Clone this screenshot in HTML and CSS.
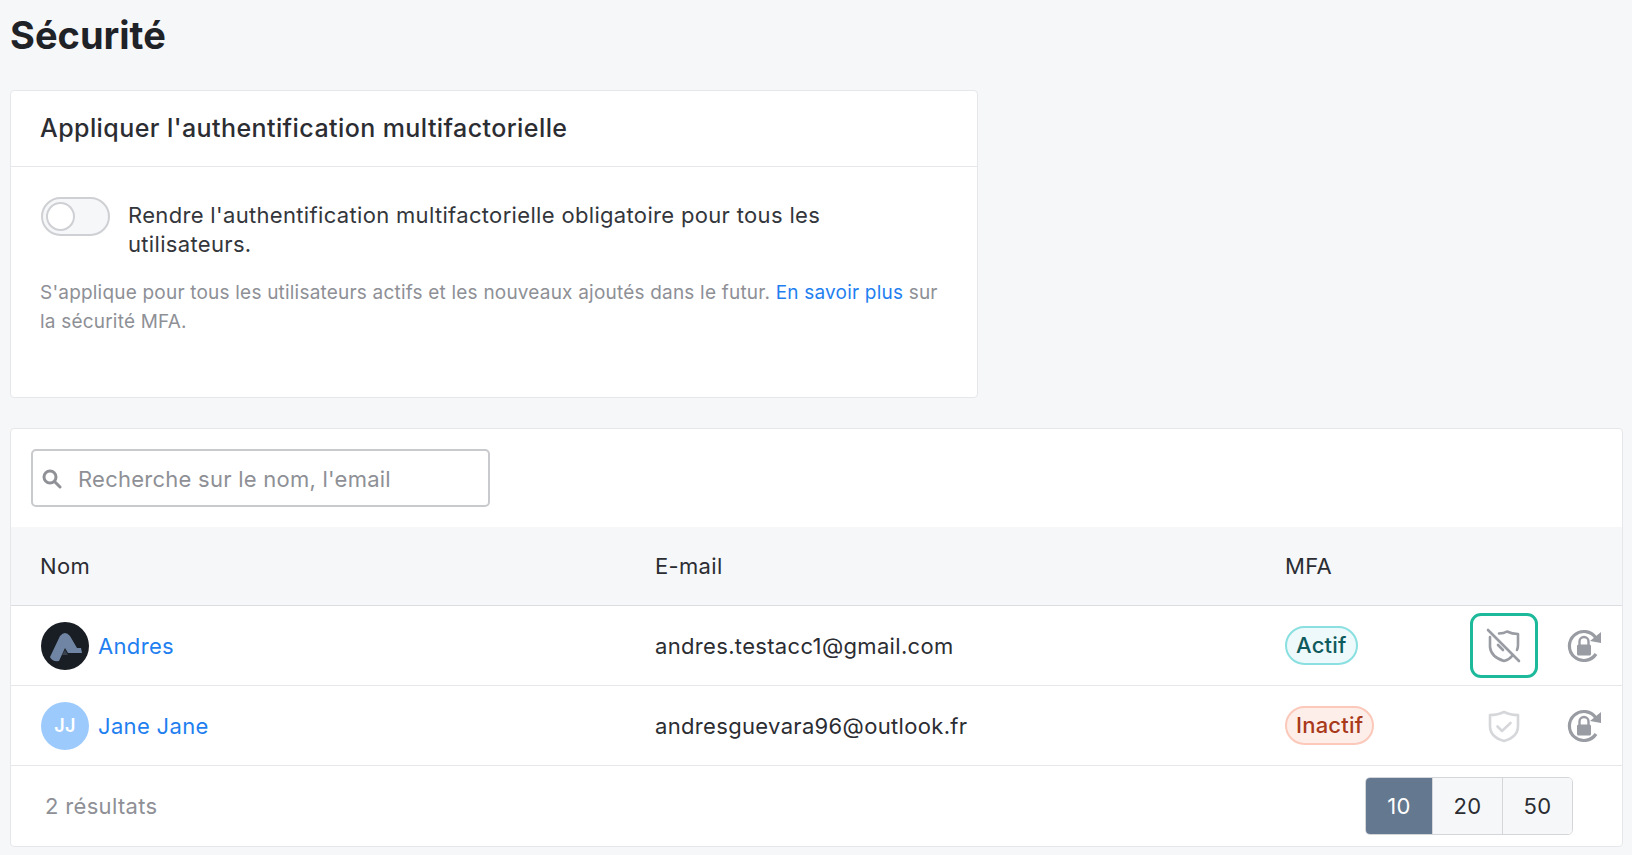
FILE: index.html
```html
<!DOCTYPE html>
<html lang="fr">
<head>
  <meta charset="UTF-8">
  <title>Sécurité</title>
  <link rel="stylesheet" href="styles.css">
</head>
<body>
  <h1 class="page-title">Sécurité</h1>

  <div class="card mfa-card">
    <div class="card-header">Appliquer l'authentification multifactorielle</div>
    <div class="card-body">
      <div class="toggle-row">
        <span class="toggle"><span class="toggle-knob"></span></span>
        <span class="toggle-label">Rendre l'authentification multifactorielle obligatoire pour tous les utilisateurs.</span>
      </div>
      <p class="help">S'applique pour tous les utilisateurs actifs et les nouveaux ajoutés dans le futur. <a href="#">En savoir plus</a> sur la sécurité MFA.</p>
    </div>
  </div>

  <div class="card users-card">
    <div class="search-bar">
      <div class="search-box">
        <svg class="search-icon" width="20" height="20" viewBox="0 0 20 20" fill="none" stroke="#8f9197" stroke-width="3" stroke-linecap="round"><circle cx="8" cy="8" r="6"/><path d="M13 13l5 5"/></svg>
        <span>Recherche sur le nom, l'email</span>
      </div>
    </div>

    <div class="users-row users-head">
      <div>Nom</div>
      <div>E-mail</div>
      <div>MFA</div>
    </div>

    <div class="users-row">
      <div class="name-cell">
        <svg class="avatar" width="48" height="48" viewBox="0 0 48 48">
          <circle cx="24" cy="24" r="24" fill="#191d24"/>
          <path d="M9 35L19 14Q24 8 29 14L36 26H40L41 31H27L24 26L18 39Q11 40 9 35Z" fill="#6f85a3"/>
          <path d="M21 33l3-5 3 5z" fill="#39424f"/>
        </svg>
        <a href="#">Andres</a>
      </div>
      <div>andres.testacc1@gmail.com</div>
      <div><span class="badge badge-on">Actif</span></div>
      <div class="actions">
        <span class="action action-focus">
          <svg width="36" height="36" viewBox="0 0 36 36" fill="none" stroke="#9a9ca3" stroke-width="2.600" stroke-linecap="round" stroke-linejoin="round"><path d="M13 5.500Q18 5.500 21 3.500Q26 6 32 6V17Q32 20 31 22"/><path d="M4 9V19Q5 29 18 33Q23 32 26 28"/><path d="M2 2L33 33"/><path d="M12 17l5 5"/></svg>
        </span>
        <span class="action">
          <svg width="36" height="36" viewBox="0 0 36 36"><path d="M30 10A14.500 14.500 0 1 0 30 26" fill="none" stroke="#9a9ca3" stroke-width="3.200"/><path d="M24 13L35 15L35 4Z" fill="#9a9ca3"/><path d="M13.500 17V13.500a4.500 4.500 0 0 1 9 0V17" fill="none" stroke="#9a9ca3" stroke-width="2.400"/><rect x="11" y="16.500" width="14" height="11" rx="1.500" fill="#9a9ca3"/></svg>
        </span>
      </div>
    </div>

    <div class="users-row">
      <div class="name-cell">
        <span class="avatar avatar-initials">JJ</span>
        <a href="#">Jane Jane</a>
      </div>
      <div>andresguevara96@outlook.fr</div>
      <div><span class="badge badge-off">Inactif</span></div>
      <div class="actions">
        <span class="action">
          <svg width="36" height="36" viewBox="0 0 36 36" fill="none" stroke="#d6d7da" stroke-width="2.600" stroke-linecap="round" stroke-linejoin="round"><path d="M18 4Q24 7 32 7V18Q32 29 18 33Q4 29 4 18V7Q12 7 18 4Z"/><path d="M11.500 18.500l4.500 4.500 8.500-8"/></svg>
        </span>
        <span class="action">
          <svg width="36" height="36" viewBox="0 0 36 36"><path d="M30 10A14.500 14.500 0 1 0 30 26" fill="none" stroke="#9a9ca3" stroke-width="3.200"/><path d="M24 13L35 15L35 4Z" fill="#9a9ca3"/><path d="M13.500 17V13.500a4.500 4.500 0 0 1 9 0V17" fill="none" stroke="#9a9ca3" stroke-width="2.400"/><rect x="11" y="16.500" width="14" height="11" rx="1.500" fill="#9a9ca3"/></svg>
        </span>
      </div>
    </div>

    <div class="table-footer">
      <span class="count">2 résultats</span>
      <div class="page-sizes">
        <span class="size size-active">10</span>
        <span class="size">20</span>
        <span class="size">50</span>
      </div>
    </div>
  </div>
</body>
</html>
```

FILE: styles.css
```css
* {
  box-sizing: border-box;
}
body {
  margin: 0;
  padding: 0 9px 0 10px;
  font-family: Inter, sans-serif;
  font-size: 22px;
  letter-spacing: 0.33px;
  background-color: #f6f7f9;
  color: #2b2d32;
  -webkit-font-smoothing: antialiased;
}
a {
  color: #1f7ff0;
  text-decoration: none;
}
.page-title {
  margin: 0;
  height: 90px;
  padding-top: 13px;
  font-size: 38px;
  line-height: 44px;
  font-weight: 700;
  letter-spacing: 0;
  color: #1f2227;
}
.card {
  background-color: #fff;
  border: 1px solid #e6e7ea;
  border-radius: 4px;
}
.mfa-card {
  width: 968px;
  height: 308px;
  margin-bottom: 30px;
}
.card-header {
  height: 76px;
  padding: 0 29px;
  font-size: 25px;
  line-height: 75px;
  font-weight: 500;
  letter-spacing: 0.42px;
  border-bottom: 1px solid #e6e7ea;
}
.card-body {
  padding: 30px 29px 0;
}
.toggle-row {
  display: flex;
  gap: 18px;
  line-height: 29px;
}
.toggle {
  flex: none;
  width: 69px;
  height: 39px;
  margin-left: 1px;
  padding: 3px;
  background-color: #f6f7f9;
  border: 2px solid #cfd0d4;
  border-radius: 20px;
}
.toggle-knob {
  display: block;
  width: 29px;
  height: 29px;
  background-color: #fff;
  border: 2px solid #cfd0d4;
  border-radius: 50%;
}
.toggle-label {
  width: 720px;
  margin-top: 4px;
  color: #33363b;
}
.help {
  margin: 19px 0 0;
  font-size: 19px;
  line-height: 29px;
  letter-spacing: 0.2px;
  color: #8e9096;
}
.users-card {
  height: 419px;
}
.search-bar {
  padding: 20px;
}
.search-box {
  display: flex;
  align-items: center;
  gap: 16px;
  width: 459px;
  height: 58px;
  padding: 2px 0 0 9px;
  font-size: 22px;
  letter-spacing: 0.25px;
  color: #8e9096;
  border: 2px solid #c9cace;
  border-radius: 5px;
}
.users-row {
  display: grid;
  grid-template-columns: 615px 630px 1fr auto;
  align-items: center;
  height: 80px;
  padding: 0 16px 0 29px;
  border-bottom: 1px solid #e6e7ea;
}
.users-head {
  height: 79px;
  background-color: #f6f7f9;
  border-bottom-color: #dcdde0;
}
.name-cell {
  display: flex;
  align-items: center;
  gap: 9px;
}
.avatar {
  flex: none;
  width: 48px;
  height: 48px;
  margin-left: 1px;
}
.avatar-initials {
  display: flex;
  align-items: center;
  justify-content: center;
  font-size: 18px;
  font-weight: 600;
  color: #fff;
  background-color: #9ccafd;
  border-radius: 50%;
}
.badge {
  display: inline-block;
  height: 39px;
  padding: 0 9px;
  line-height: 35px;
  font-weight: 500;
  letter-spacing: 0.2px;
  border: 2px solid;
  border-radius: 20px;
}
.badge-on {
  color: #0f5a5c;
  background-color: #edf9fa;
  border-color: #8adfe0;
}
.badge-off {
  color: #a8391a;
  background-color: #fdeeea;
  border-color: #fbc8b9;
}
.actions {
  display: flex;
  align-items: center;
  gap: 24px;
}
.action {
  display: flex;
  align-items: center;
  justify-content: center;
  width: 68px;
  height: 65px;
  border: 3px solid transparent;
  border-radius: 11px;
}
.action:last-child {
  width: 44px;
}
.action-focus {
  border-color: #1cb99a;
}
.table-footer {
  display: flex;
  align-items: center;
  justify-content: space-between;
  height: 80px;
  padding: 0 49px 0 34px;
}
.count {
  color: #8e9096;
}
.page-sizes {
  display: flex;
  height: 58px;
  border: 1px solid #d5d6d9;
  border-radius: 5px;
  overflow: hidden;
}
.size {
  width: 70px;
  line-height: 56px;
  text-align: center;
  background-color: #f6f7f9;
  border-left: 1px solid #d5d6d9;
}
.size-active {
  width: 66px;
  color: #fff;
  background-color: #64788f;
  border-left: none;
}
```
